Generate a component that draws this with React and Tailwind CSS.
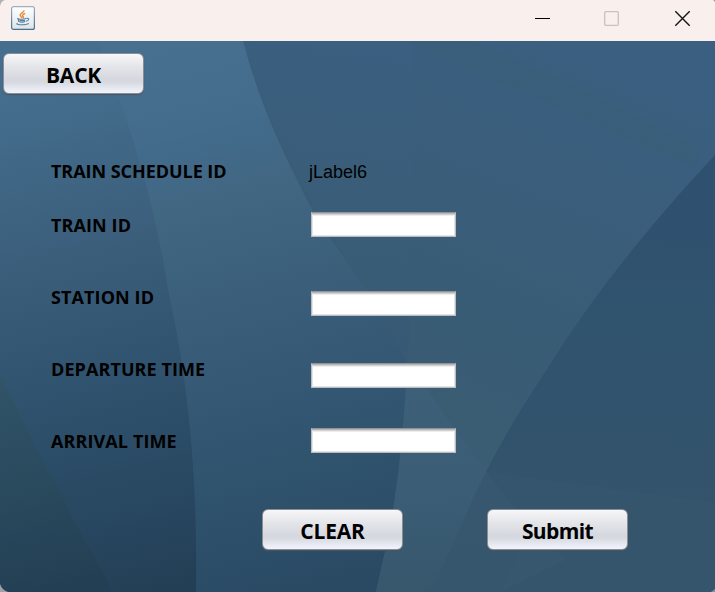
import React from "react";

function Backdrop() {
  return (
    <svg className="absolute inset-0 h-full w-full" viewBox="0 41 715 551" preserveAspectRatio="none" aria-hidden="true">
      <defs>
        <linearGradient id="band" gradientUnits="userSpaceOnUse" x1="190" y1="41" x2="330" y2="610">
          <stop offset="0" stopColor="#477090" />
          <stop offset="0.15" stopColor="#426b8c" />
          <stop offset="0.26" stopColor="#416783" />
          <stop offset="0.45" stopColor="#3b5f7b" />
          <stop offset="0.7" stopColor="#315570" />
          <stop offset="1" stopColor="#294862" />
        </linearGradient>
        <linearGradient id="left" gradientUnits="userSpaceOnUse" x1="0" y1="50" x2="135" y2="600">
          <stop offset="0" stopColor="#466e8f" />
          <stop offset="0.1" stopColor="#446c8d" />
          <stop offset="0.2" stopColor="#406886" />
          <stop offset="0.38" stopColor="#3b5e7b" />
          <stop offset="0.6" stopColor="#30536f" />
          <stop offset="0.78" stopColor="#2a4a64" />
          <stop offset="1" stopColor="#233f56" />
        </linearGradient>
        <linearGradient id="corner" gradientUnits="userSpaceOnUse" x1="0" y1="380" x2="50" y2="592">
          <stop offset="0" stopColor="#315468" />
          <stop offset="0.5" stopColor="#2a4a5e" />
          <stop offset="1" stopColor="#233f54" />
        </linearGradient>
        <linearGradient id="right" gradientUnits="userSpaceOnUse" x1="590" y1="41" x2="430" y2="430">
          <stop offset="0" stopColor="#3a5f80" />
          <stop offset="0.3" stopColor="#3a5e7c" />
          <stop offset="0.65" stopColor="#395c76" />
          <stop offset="1" stopColor="#3a5d73" />
        </linearGradient>
        <linearGradient id="hill" gradientUnits="userSpaceOnUse" x1="700" y1="155" x2="680" y2="592">
          <stop offset="0" stopColor="#2f5070" />
          <stop offset="0.4" stopColor="#30536e" />
          <stop offset="0.7" stopColor="#33536c" />
          <stop offset="1" stopColor="#35556b" />
        </linearGradient>
        <linearGradient id="middle" gradientUnits="userSpaceOnUse" x1="300" y1="41" x2="270" y2="340">
          <stop offset="0" stopColor="#3a5f80" />
          <stop offset="0.5" stopColor="#3a5d79" />
          <stop offset="1" stopColor="#375974" />
        </linearGradient>
        <linearGradient id="wedge" gradientUnits="userSpaceOnUse" x1="430" y1="380" x2="440" y2="592">
          <stop offset="0" stopColor="#3d6078" />
          <stop offset="0.5" stopColor="#3b5d76" />
          <stop offset="1" stopColor="#36576c" />
        </linearGradient>
      </defs>
      <rect x="0" y="41" width="715" height="551" fill="url(#right)" />
      <path d="M243 41H413Q413 200 410 302Q409 345 407 389L374 298C330 235 275 150 243 41Z" fill="url(#middle)" opacity="0.8" />
      <path d="M408 41H470Q590 88 700 150V155L694 168Q560 110 408 41Z" fill="#3a5f78" opacity="0.45" />
      <path d="M0 41H243C262 112 287 161 315 215Q342 256 374 302Q394 336 407 362Q406 440 393 510Q386 551 376 592H0Z" fill="url(#band)" />
      <path d="M0 41H98C145 160 161 242 168 290C184 362 198 452 196 592H0Z" fill="url(#left)" />
      <path d="M0 374C35 444 65 508 114 592H0Z" fill="url(#corner)" />
      <path d="M407 362L426 387Q453 430 488 472L532 528L500 592H376Q386 551 393 510Q404 440 407 362Z" fill="url(#wedge)" />
      <path d="M715 155C645 230 590 300 549 366C524 404 505 434 486 472L515 508Q540 535 565 560L500 592H715Z" fill="url(#hill)" />
      <path d="M486 472L715 502V592H430C452 550 466 512 486 472Z" fill="#36566d" opacity="0.7" />
      <path d="M0 584Q2 590 8 592H0Z" fill="#9ba2a8" />
      <path d="M715 589V592H711Z" fill="#81909b" />
    </svg>
  );
}

function JavaIcon() {
  return (
    <svg className="h-6 w-6" viewBox="0 0 24 24" fill="none">
      <defs>
        <linearGradient id="tile" x1="0" y1="0" x2="0" y2="1">
          <stop offset="0" stopColor="#ffffff" />
          <stop offset="1" stopColor="#dce4e9" />
        </linearGradient>
        <linearGradient id="tileEdge" x1="0" y1="0" x2="0" y2="1">
          <stop offset="0" stopColor="#9db0be" />
          <stop offset="1" stopColor="#456f8c" />
        </linearGradient>
      </defs>
      <rect x="0.6" y="0.6" width="22.8" height="22.8" rx="2" fill="url(#tile)" stroke="url(#tileEdge)" strokeWidth="1.2" />
      <path d="M13 4.3C13.3 6.5 8.6 7.2 9.2 9.3C9.5 10.3 11 10.7 10.8 12M14.2 7.5C11.3 8.5 11 9.5 12.2 10.6C12.7 11.1 12.3 11.7 11.8 12" stroke="#ec8a3a" strokeWidth="1.4" />
      <path d="M6.2 12.4C8 13.5 13 13.4 15.2 12.4M7.1 13L7.8 15.6Q11 16.6 14.2 15.6M15.5 12.4C18.6 11.6 18.4 14.4 15 15.2M8.6 14.5H14M6.6 17.2C5 17.8 6 18.5 9 18.7C13 18.9 16.5 18.4 17.8 17.4" stroke="#587f9e" strokeWidth="1.1" />
    </svg>
  );
}

function TitleBar() {
  return (
    <header className="flex h-[41px] items-start justify-between bg-[#f9f0ed]">
      <div className="relative pt-1.5 pl-[11px]">
        <svg className="absolute top-0 left-0 h-2 w-2" viewBox="0 0 8 8"><path d="M0 0H5Q1 1 0 6Z" fill="#b3b0af" /></svg>
        <JavaIcon />
      </div>
      <svg className="h-[41px] w-[215px]" viewBox="0 0 215 41" fill="none">
        <path d="M35 18.5H50" stroke="#000" />
        <rect x="104.7" y="11.7" width="13.6" height="13.6" rx="1" stroke="#c7c1bf" strokeWidth="1.3" />
        <path d="M175.3 11.3L189.7 25.7M189.7 11.3L175.3 25.7" stroke="#151515" strokeWidth="1.4" />
        <path d="M213 0H215V2Z" fill="#aaa6a5" />
      </svg>
    </header>
  );
}

function Button({ children, tracking = "tracking-[-0.2px]" }) {
  return (
    <button className={`flex h-[41px] w-[141px] items-center justify-center rounded-[6px] border border-[#8a8d91] bg-[linear-gradient(to_bottom,#f7f7f9_0%,#e3e4e8_35%,#d5d8df_65%,#d6d9e0_72%,#f0f3fb_98%)] pt-0.5 text-[21px] leading-6 font-bold text-black shadow-[0_1px_1px_#4c5660] ${tracking}`}>
      {children}
    </button>
  );
}

function Field({ label }) {
  return (
    <input
      aria-label={label}
      className="block h-[25px] w-[145px] border border-[#b9bcc0] border-t-[#949397] bg-white px-1 text-sm shadow-[inset_0_1px_0_#b4b3b6,inset_0_2px_0_#d3d3d5,inset_0_3px_0_#ededee,inset_0_0_0_1px_#e5e5e6] outline-none"
    />
  );
}

export default function App() {
  return (
    <div className="flex h-[592px] w-[715px] flex-col overflow-hidden font-['Open_Sans','Noto_Sans',sans-serif] text-black">
      <TitleBar />
      <main className="relative isolate flex-1">
        <div className="absolute inset-0 -z-10"><Backdrop /></div>
        <div className="pt-3 pl-[3px]"><Button>BACK</Button></div>
        <div className="flex h-[403px] pt-[65px] pl-[51px]">
          <div className="flex w-[258px] flex-col text-[18px] leading-6 font-bold whitespace-nowrap">
            <span className="tracking-[-0.05px]">TRAIN SCHEDULE ID</span>
            <span className="mt-[30px] tracking-[0.1px]">TRAIN ID</span>
            <span className="mt-12 tracking-[0.1px]">STATION ID</span>
            <span className="mt-12 tracking-[0.08px]">DEPARTURE TIME</span>
            <span className="mt-12 tracking-[0.1px]">ARRIVAL TIME</span>
          </div>
          <div className="flex flex-col pt-px">
            <span className="font-['Liberation_Sans',Arial,sans-serif] text-[18px] leading-6">jLabel6</span>
            <div className="flex flex-col pt-7 pl-0.5">
              <Field label="Train ID" />
              <div className="mt-[54px]"><Field label="Station ID" /></div>
              <div className="mt-[47px]"><Field label="Departure time" /></div>
              <div className="mt-10"><Field label="Arrival time" /></div>
            </div>
          </div>
        </div>
        <div className="flex gap-[84px] pt-3 pl-[262px]">
          <Button>CLEAR</Button>
          <Button tracking="tracking-[-0.6px]">Submit</Button>
        </div>
      </main>
    </div>
  );
}
